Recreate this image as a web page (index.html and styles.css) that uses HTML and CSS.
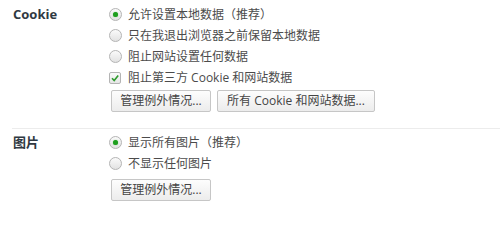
FILE: index.html
```html
<!DOCTYPE html>
<html lang="zh-CN">
<head>
<meta charset="utf-8">
<link rel="stylesheet" href="styles.css">
</head>
<body>
<div class="section first">
  <div class="label">Cookie</div>
  <div class="opts">
    <div class="row"><span class="radio on"></span><span>允许设置本地数据（推荐）</span></div>
    <div class="row"><span class="radio"></span><span>只在我退出浏览器之前保留本地数据</span></div>
    <div class="row"><span class="radio"></span><span>阻止网站设置任何数据</span></div>
    <div class="row"><span class="check"><svg width="10" height="10" viewBox="0 0 10 10"><path d="M2 5.2 L4.2 7.6 L8.2 2.6" fill="none" stroke="#2e9b2e" stroke-width="1.6"/></svg></span><span>阻止第三方 Cookie 和网站数据</span></div>
    <div class="buttons">
      <button class="btn w1">管理例外情况...</button>
      <button class="btn w2">所有 Cookie 和网站数据...</button>
    </div>
  </div>
</div>
<div class="sep"></div>
<div class="section second">
  <div class="label">图片</div>
  <div class="opts">
    <div class="row"><span class="radio on"></span><span>显示所有图片（推荐）</span></div>
    <div class="row"><span class="radio"></span><span>不显示任何图片</span></div>
    <div class="buttons b2">
      <button class="btn w1">管理例外情况...</button>
    </div>
  </div>
</div>
</body>
</html>
```
FILE: styles.css
```css
html, body {
  margin: 0;
  padding: 0;
  background: #fff;
}
body {
  width: 500px;
  height: 213px;
  overflow: hidden;
  font-family: "Open Sans", "Noto Sans CJK SC", sans-serif;
  font-size: 12px;
  color: #4b4b4b;
}
.section {
  display: flex;
}
.section.first {
  padding-top: 4px;
  padding-bottom: 16px;
}
.section.second {
  padding-top: 3px;
}
.label {
  width: 96px;
  padding-left: 13px;
  font-weight: bold;
  font-size: 13px;
  color: #303942;
  line-height: 21px;
}
.opts {
  display: flex;
  flex-direction: column;
}
.row {
  display: flex;
  align-items: center;
  height: 21px;
  line-height: 21px;
  white-space: nowrap;
}
.radio {
  box-sizing: border-box;
  width: 13px;
  height: 13px;
  border-radius: 50%;
  border: 1px solid #b4b4b4;
  background: linear-gradient(#fafafa, #e2e2e2);
  margin-right: 6px;
  display: flex;
  align-items: center;
  justify-content: center;
}
.radio.on::after {
  content: "";
  width: 5px;
  height: 5px;
  border-radius: 50%;
  background: #1e9e1e;
  box-shadow: 0 0 1px #53c453;
}
.check {
  box-sizing: border-box;
  width: 12px;
  height: 12px;
  border: 1px solid #b4b4b4;
  border-radius: 2px;
  background: linear-gradient(#fafafa, #e6e6e6);
  margin-right: 7px;
  display: flex;
  align-items: center;
  justify-content: center;
}
.check svg {
  display: block;
}
.buttons {
  display: flex;
  gap: 6px;
  margin-top: 2px;
  margin-left: 2px;
}
.buttons.b2 {
  margin-top: 5px;
}
.btn {
  box-sizing: border-box;
  height: 22px;
  padding: 0;
  border: 1px solid #c6c6c6;
  border-radius: 2px;
  background: linear-gradient(#fdfdfd, #ececec);
  font-family: "Open Sans", "Noto Sans CJK SC", sans-serif;
  font-size: 12px;
  color: #444;
  line-height: 20px;
  text-align: center;
}
.btn.w1 {
  width: 100px;
}
.btn.w2 {
  width: 158px;
}
.sep {
  margin-left: 12px;
  height: 1px;
  background: #ececec;
}
```
